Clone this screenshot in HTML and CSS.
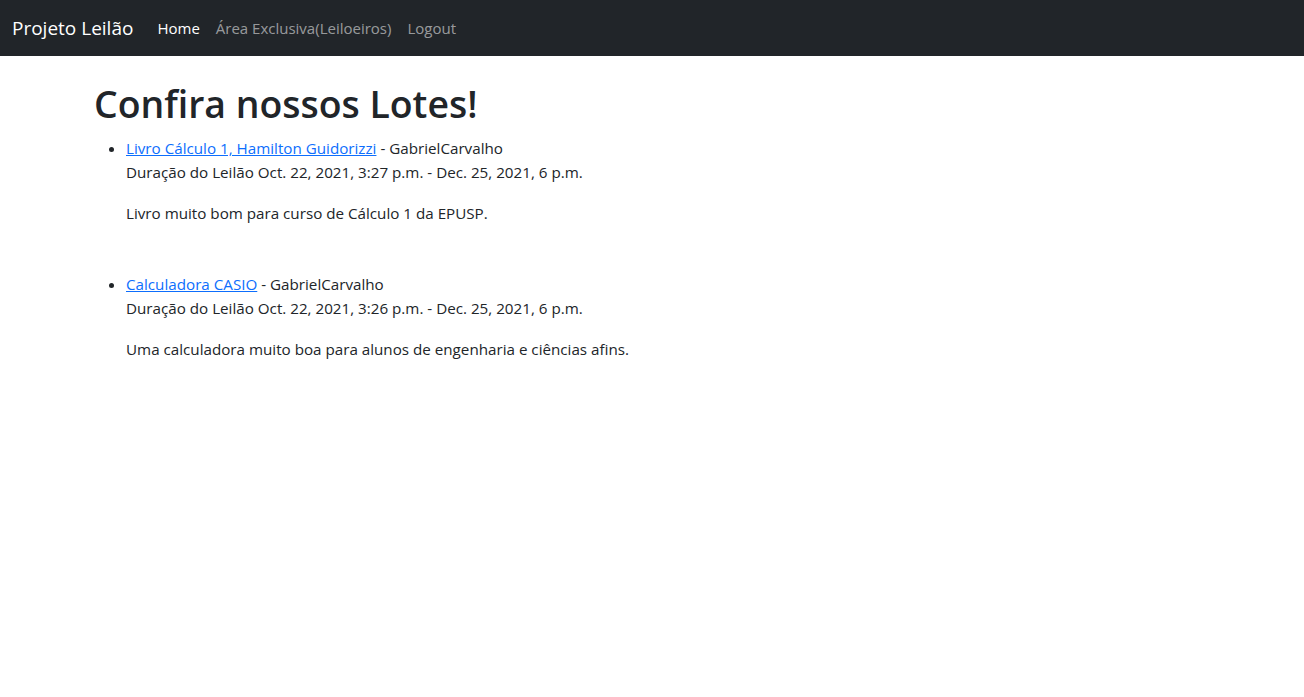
FILE: index.html
```html
<!DOCTYPE html>
<html lang="pt-br">
<head>
<meta charset="utf-8">
<title>Projeto Leilão</title>
<link rel="stylesheet" href="styles.css">
</head>
<body>
<nav class="navbar">
  <div class="navbar-inner">
    <a class="brand" href="#">Projeto Leilão</a>
    <ul class="nav">
      <li><a class="nav-link active" href="#">Home</a></li>
      <li><a class="nav-link" href="#">Área Exclusiva(Leiloeiros)</a></li>
      <li><a class="nav-link" href="#">Logout</a></li>
    </ul>
  </div>
</nav>
<main class="container">
  <h1 class="title">Confira nossos Lotes!</h1>
  <ul class="lots">
    <li class="lot">
      <div class="lot-line"><a href="#">Livro Cálculo 1, Hamilton Guidorizzi</a> - GabrielCarvalho</div>
      <div class="lot-line">Duração do Leilão Oct. 22, 2021, 3:27 p.m. - Dec. 25, 2021, 6 p.m.</div>
      <p class="lot-desc">Livro muito bom para curso de Cálculo 1 da EPUSP.</p>
    </li>
    <li class="lot">
      <div class="lot-line"><a href="#">Calculadora CASIO</a> - GabrielCarvalho</div>
      <div class="lot-line">Duração do Leilão Oct. 22, 2021, 3:26 p.m. - Dec. 25, 2021, 6 p.m.</div>
      <p class="lot-desc">Uma calculadora muito boa para alunos de engenharia e ciências afins.</p>
    </li>
  </ul>
</main>
</body>
</html>
```

FILE: styles.css
```css
* { box-sizing: border-box; }
html, body { margin: 0; padding: 0; }
body {
  font-family: "Open Sans", "Noto Sans", "DejaVu Sans", sans-serif;
  font-size: 15.2px;
  line-height: 24px;
  color: #212529;
  background: #fff;
}
.navbar {
  background: #212529;
  height: 56px;
  padding: 8px 0;
}
.navbar-inner {
  display: flex;
  align-items: center;
  height: 40px;
  padding: 0 12px;
}
.brand {
  color: #fff;
  text-decoration: none;
  font-size: 19px;
  line-height: 30px;
  padding: 5px 0;
  margin-right: 16px;
}
.nav {
  display: flex;
  list-style: none;
  margin: 0;
  padding: 0;
}
.nav-link {
  display: block;
  padding: 8px;
  color: rgba(255, 255, 255, 0.55);
  text-decoration: none;
  font-size: 15px;
  line-height: 24px;
}
.nav-link.active { color: #fff; }
.container {
  max-width: 1140px;
  margin: 0 auto;
  padding: 0 12px;
}
.title {
  margin: 24px 0 8px;
  font-size: 37.4px;
  font-weight: 600;
  line-height: 48px;
}
.lots {
  margin: 0;
  padding-left: 32px;
}
.lot { margin-bottom: 47px; }
.lot-line a { color: #0d6efd; }
.lot-desc { margin: 17px 0 0; }
```
